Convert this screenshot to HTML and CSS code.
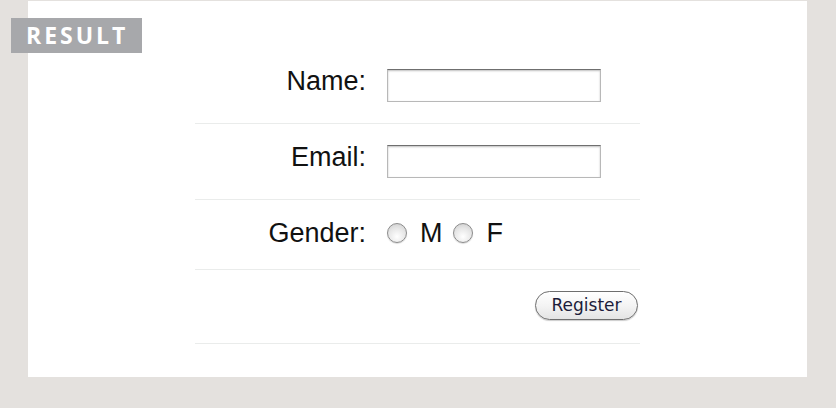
FILE: index.html
```html
<!DOCTYPE html>
<html lang="en">
<head>
    <meta charset="UTF-8">
    <meta name="viewport" content="width=device-width, initial-scale=1.0">
    <title>Result</title>
    <link rel="stylesheet" href="styles.css">
</head>
<body>

<div class="result-panel">
    <div class="result-badge">RESULT</div>

    <form class="register-form">
        <div class="form-row">
            <label for="name" class="form-label">Name:</label>
            <div class="form-control">
                <input type="text" id="name" name="name" class="text-field">
            </div>
        </div>

        <div class="form-row">
            <label for="email" class="form-label">Email:</label>
            <div class="form-control">
                <input type="text" id="email" name="email" class="text-field">
            </div>
        </div>

        <div class="form-row">
            <span class="form-label">Gender:</span>
            <div class="form-control radio-group">
                <input type="radio" id="male" name="gender" value="m" class="radio">
                <label for="male" class="radio-label">M</label>
                <input type="radio" id="female" name="gender" value="f" class="radio">
                <label for="female" class="radio-label">F</label>
            </div>
        </div>

        <div class="form-row">
            <span class="form-label"></span>
            <div class="form-control submit-cell">
                <button type="button" class="register-button">Register</button>
            </div>
        </div>
    </form>
</div>

</body>
</html>
```

FILE: styles.css
```css
body {
    margin: 0;
    background-color: #e4e1de;
    font-family: "Liberation Sans", Arial, sans-serif;
    color: #111;
}

.result-panel {
    position: relative;
    width: 779px;
    height: 376px;
    margin: 1px 0 0 28px;
    padding-top: 47px;
    box-sizing: border-box;
    background-color: white;
}

/* label sticking out over the left edge of the panel */
.result-badge {
    position: absolute;
    left: -17px;
    top: 17px;
    width: 131px;
    height: 35px;
    box-sizing: border-box;
    padding-left: 15px;
    background-color: #a7a8ab;
    color: white;
    font-family: "Open Sans", sans-serif;
    font-weight: bold;
    font-size: 23px;
    line-height: 35px;
    letter-spacing: 3px;
}

.register-form {
    width: 445px;
    margin-left: 167px;
}

.form-row {
    display: grid;
    grid-template-columns: 171px 1fr;
    column-gap: 21px;
    align-items: start;
    padding: 20px 0;
    border-bottom: 1px solid #eaeceb;
}

.form-label {
    font-size: 27px;
    line-height: 26px;
    text-align: right;
}

.text-field {
    display: block;
    width: 214px;
    height: 33px;
    margin: 1px 0;
    box-sizing: border-box;
    border: 1px solid #b8b8b8;
    border-top-color: #6f6f6f;
    box-shadow: inset 0 1px 2px rgba(0, 0, 0, 0.25);
    background-color: white;
    font-size: 16px;
}

.radio-group {
    display: flex;
    align-items: flex-start;
    height: 29px;
}

.radio {
    appearance: none;
    width: 20px;
    height: 20px;
    margin: 3px 0 0 0;
    box-sizing: border-box;
    border: 1px solid #8c8c8c;
    border-radius: 50%;
    background: radial-gradient(circle at 50% 70%, #ffffff 0%, #e6e6e6 55%, #c9c9c9 100%);
    box-shadow: 0 1px 1px rgba(0, 0, 0, 0.15);
}

.radio-label {
    font-size: 27px;
    line-height: 26px;
    margin: 0 10px 0 13px;
}

.radio-label:last-child {
    margin-left: 14px;
}

.submit-cell {
    display: flex;
    justify-content: flex-end;
}

.register-button {
    width: 103px;
    height: 29px;
    margin: 1px 2px 3px 0;
    padding: 0 0 2px 0;
    border: 1px solid #6e6e6e;
    border-radius: 15px;
    background: linear-gradient(#ffffff, #f4f4f4 50%, #e4e4e4);
    box-shadow: 0 1px 1px rgba(0, 0, 0, 0.2);
    font-family: "DejaVu Sans", sans-serif;
    font-size: 17px;
    color: #1c1c3a;
    cursor: pointer;
}
```
